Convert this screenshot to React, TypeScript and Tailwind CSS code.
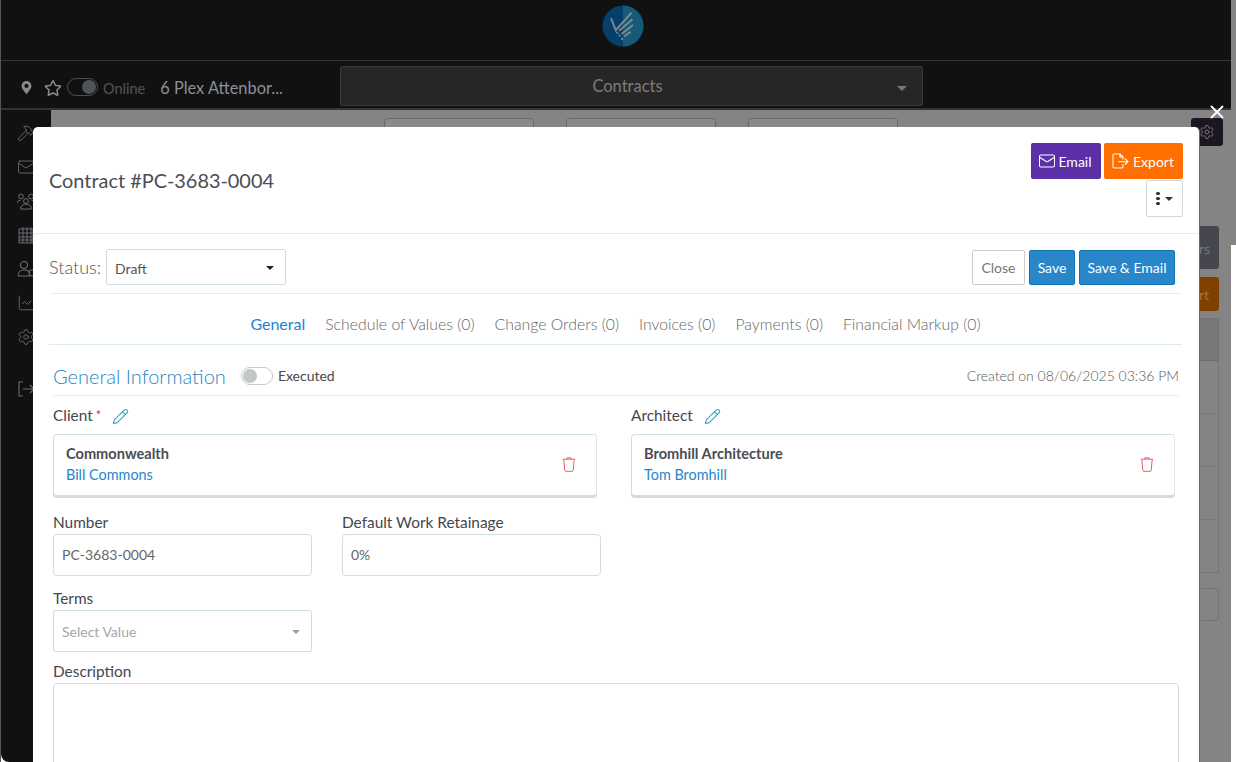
import React from "react";
import { Hammer, Mail, Settings, LineChart, Pencil, X } from "lucide-react";
import { FaMapMarkerAlt, FaRegStar } from "react-icons/fa";

function Caret({ className }: { className: string }) {
  return <span className={`inline-block w-0 h-0 border-x-[4px] border-x-transparent border-t-[4px] ${className}`} />;
}

function TrashIcon() {
  return (
    <svg width="14" height="15" viewBox="0 0 14 15" fill="none" stroke="#e4606d" strokeWidth="1">
      <path d="M.8 2.2h12.4M4.5 2.2 5 .8h4l.5 1.4M1.8 2.2l1 11.3c0 .4.3.8.8.8h6.8c.5 0 .8-.4.8-.8l1-11.3" />
    </svg>
  );
}

function ContactCard({ name, person }: { name: string; person: string }) {
  return (
    <div className="h-[62px] rounded-[4px] border border-[#cfdfe0] border-r-[#e2e5e8] shadow-[0_2px_0_#d3dcdc] pl-3 pr-5 pb-[1px] flex items-center justify-between bg-white">
      <div>
        <div className="text-[14.6px] font-bold leading-[20px] text-[#4a4d53]">{name}</div>
        <div className="text-[14.4px] leading-[20px] mt-[1px] text-[#2a85c7]">{person}</div>
      </div>
      <TrashIcon />
    </div>
  );
}

function Pen() {
  return <Pencil size={17} strokeWidth={1.5} className="text-[#2ba7d3]" />;
}

export default function App() {
  const tabs = ["Schedule of Values (0)", "Change Orders (0)", "Invoices (0)", "Payments (0)", "Financial Markup (0)"];
  return (
    <div className="relative w-[1236px] h-[762px] overflow-hidden bg-white font-['Lato','Open_Sans',sans-serif]">
      {/* dimmed page behind the dialog */}
      <div className="h-[245px] w-[1236px] bg-[#848484]" />

      <div className="absolute inset-0 pr-[5px] pointer-events-none">
        <div className="flex flex-col h-full border-l border-l-[#555]">
          <div className="h-[61px] bg-[#111112] border-b border-[#333] flex items-center justify-center shrink-0 pl-[14px] pb-[8px]">
            <svg width="42" height="42" viewBox="0 0 44 44">
              <circle cx="22" cy="22" r="21.5" fill="#053f6c" />
              <path d="M22 .5a21.5 21.5 0 0 1 0 43z" fill="#175a78" />
              <path d="M9.500 14l4.900 12.400L31 8M18 27l14-12M20.500 30.500l12-9.500M23 33l7-5" stroke="#83888b" strokeWidth="2" fill="none" />
              <rect x="15" y="28" width="2" height="2" fill="#83888b" />
              <rect x="17.500" y="31" width="2" height="2" fill="#83888b" />
              <rect x="20" y="34.500" width="2" height="2" fill="#83888b" />
            </svg>
          </div>
          <div className="h-[49px] bg-[#111112] border-b-2 border-[#333] flex items-center shrink-0 pl-[19px] relative">
            <FaMapMarkerAlt size={13} className="text-[#8a8a8a] mt-[5px]" />
            <FaRegStar size={18} className="text-[#8a8a8a] ml-[11px] mt-[6px]" />
            <div className="w-[31px] h-[18px] rounded-full border border-[#4a5050] ml-[5px] mt-[5px] flex items-center justify-end pr-[1px]">
              <span className="w-[14px] h-[14px] rounded-full bg-[#4c5658]" />
            </div>
            <span className="ml-[5px] text-[14.5px] text-[#555] mt-[8px]">Online</span>
            <span className="ml-[15px] text-[16.4px] text-[#8b9099] mt-[8px] font-normal">6 Plex Attenbor...</span>
            <div className="absolute left-[339px] top-[5px] w-[583px] h-[40px] bg-[#262627] border border-[#3a3a3a] rounded-[2px] flex items-center justify-center pr-[8px]">
              <span className="text-[16.5px] text-[#7c7c7c]">Contracts</span>
              <Caret className="absolute right-[15px] top-[19px] border-t-[#777] !border-x-[5px] !border-t-[5px]" />
            </div>
          </div>
          <div className="flex-1 flex min-h-0">
            <div className="w-[50px] bg-[#111112] rounded-bl-[8px] flex flex-col items-center text-[#6a6e72] pt-[14px] gap-[16px] shrink-0">
              <Hammer size={18} strokeWidth={1.2} />
              <Mail size={18} strokeWidth={1.2} />
              <svg width="18" height="18" viewBox="0 0 18 18" fill="none" stroke="currentColor" strokeWidth="1"><circle cx="4" cy="4.5" r="2.4" /><circle cx="14" cy="4.5" r="2.4" /><circle cx="9" cy="9" r="2.4" /><path d="M0 11.500c0-2 1.500-3.200 3.500-3.200M18 11.500c0-2-1.500-3.200-3.500-3.200M3.500 17c0-3 2-5 5.500-5s5.500 2 5.500 5z" /></svg>
              <svg width="18" height="18" viewBox="0 0 18 18" fill="none" stroke="currentColor" strokeWidth="1"><path d="M2 3h14v14H2zM2 7h14M2 11h14M2 14h14M6 1v16M10 1v16M14 1v16" /></svg>
              <svg width="18" height="18" viewBox="0 0 18 18" fill="none" stroke="currentColor" strokeWidth="1.1"><circle cx="7" cy="5" r="3.5" /><path d="M1 16c0-4 3-6 6-6s5 1 6 3M1 16h12" /><circle cx="15" cy="13" r="3" /></svg>
              <LineChart size={18} strokeWidth={1.2} />
              <Settings size={18} strokeWidth={1.2} />
              <svg className="mt-[18px]" width="18" height="18" viewBox="0 0 18 18" fill="none" stroke="currentColor" strokeWidth="1.1"><path d="M6 2H2v14h4M6 9h11M13 5l4 4-4 4" /></svg>
            </div>
            <div className="flex-1">
              <div className="flex gap-[32px] pl-[333px]">
                <div className="w-[150px] h-[20px] mt-[8px] rounded-[4px] border border-[#6a6a6a] bg-[#8a8a8a]" />
                <div className="w-[150px] h-[20px] mt-[8px] rounded-[4px] border border-[#6a6a6a] bg-[#8a8a8a]" />
                <div className="w-[150px] h-[20px] mt-[8px] rounded-[4px] border border-[#6a6a6a] bg-[#8a8a8a]" />
              </div>
            </div>
          </div>
        </div>
      </div>

      {/* visible slivers of the page to the right of the dialog */}
      <div className="absolute left-[1199px] top-[110px] w-[32px] h-[652px] bg-[#848484]" />
      <div className="absolute left-[1191px] top-[118px] w-[32px] h-[28px] rounded-[3px] bg-[#1c1622] flex items-center justify-center">
        <Settings size={16} strokeWidth={1.4} className="text-[#77777f]" />
      </div>
      <div className="absolute left-[1199px] top-[226px] w-[20px] h-[43px] rounded-r-[3px] bg-[#45464e] text-[#767676] text-[14px] leading-[46px] overflow-hidden">rs</div>
      <div className="absolute left-[1199px] top-[277px] w-[20px] h-[34px] rounded-r-[3px] bg-[#804000] text-[#a87040] text-[14px] leading-[36px] overflow-hidden">rt</div>
      <div className="absolute left-[1199px] top-[318px] w-[20px] h-[255px] border border-l-0 border-[#747474] flex flex-col">
        <div className="h-[42px] bg-[#787878] border-b border-[#6e6e6e]" />
        <div className="h-[53px] border-b border-[#787878]" />
        <div className="h-[53px] border-b border-[#787878]" />
        <div className="h-[53px] border-b border-[#787878]" />
      </div>
      <div className="absolute left-[1199px] top-[588px] w-[20px] h-[33px] rounded-r-[4px] border border-l-0 border-[#747474]" />

      {/* dialog */}
      <div className="absolute left-[33px] top-[127px] w-[1167px] h-[635px] bg-white rounded-t-[5px] overflow-hidden border-r border-r-[#666] text-[#44474d]">
        <div className="h-[107px] border-b border-[#e3eeee] pl-[16px] pr-[16px] flex items-center justify-between">
          <h1 className="text-[19.9px] leading-[28px] text-[#4a4d53]">Contract #PC-3683-0004</h1>
          <div className="flex flex-col items-end self-start pt-[16px]">
            <div className="flex gap-[3px]">
              <div className="w-[70px] h-[36px] rounded-[2px] bg-[#5a2fa8] text-white text-[14px] flex items-center justify-center gap-[2px] pr-[2px]">
                <Mail size={18} strokeWidth={1.4} />Email
              </div>
              <div className="w-[79px] h-[36px] rounded-[2px] bg-[#ff6f00] text-white text-[14px] flex items-center justify-center gap-[4px] pr-[1px]">
                <svg width="17" height="16" viewBox="0 0 17 16" fill="none" stroke="currentColor" strokeWidth="1.1"><path d="M11 6.500V4L8 1H2.200C1.500 1 1 1.500 1 2.200v11.600c0 .7.5 1.200 1.200 1.200h7.600c.7 0 1.200-.5 1.200-1.200V11M8 1v3h3M6 8.700h10M13 5.700l3 3-3 3" /></svg>
                Export
              </div>
            </div>
            <div className="w-[37px] h-[37px] mt-[1px] rounded-[2px] border border-[#d4d6d8] flex items-center justify-center gap-[5px]">
              <div className="flex flex-col gap-[1.5px]">
                <span className="w-[3.5px] h-[3.5px] rounded-full bg-[#333]" />
                <span className="w-[3.5px] h-[3.5px] rounded-full bg-[#333]" />
                <span className="w-[3.5px] h-[3.5px] rounded-full bg-[#333]" />
              </div>
              <Caret className="border-t-[#333]" />
            </div>
          </div>
        </div>

        <div className="pl-[16px] pr-[24px] pt-[15px]">
          <div className="flex items-center h-[36px]">
            <span className="text-[18px] text-[#555] font-light">Status:</span>
            <div className="ml-[5px] w-[180px] h-[36px] border border-[#cfdfe0] rounded-[2px] pl-[8px] pr-[11px] pt-[2px] flex items-center justify-between text-[14px] text-[#555]">
              Draft
              <Caret className="border-t-[#222]" />
            </div>
            <div className="ml-auto flex gap-[4px]">
              <div className="w-[53px] h-[35px] border border-[#ccc] rounded-[2px] flex items-center justify-center text-[14px] text-[#777]">Close</div>
              <div className="w-[46px] h-[35px] bg-[#2886c9] border border-[#0f76b6] rounded-[2px] flex items-center justify-center text-[14px] text-white">Save</div>
              <div className="w-[96px] h-[35px] bg-[#2886c9] border border-[#0f76b6] rounded-[2px] flex items-center justify-center text-[14px] text-white">Save &amp; Email</div>
            </div>
          </div>
        </div>

        <div className="ml-[17px] mr-[17px] mt-[8px] border-b border-[#e3eeee]" />
        <div className="ml-[16px] mr-[17px] h-[51px] border-b border-[#dceded] flex items-center justify-center gap-[20px] text-[15.8px] font-light text-[#666] pt-[10px]">
          <span className="text-[#1d82d6] font-normal text-[16px]">General</span>
          {tabs.map((t) => <span key={t}>{t}</span>)}
        </div>

        <div className="pl-[20px] pr-[20px]">
          <div className="h-[51px] border-b border-[#e3eeee] flex items-center pt-[11px]">
            <h2 className="text-[20px] font-light text-[#2a85c7]">General Information</h2>
            <div className="ml-[15px] w-[32px] h-[18px] rounded-full border border-[#c8cacc] flex items-center pl-[1px]">
              <span className="w-[14px] h-[14px] rounded-full bg-[#c3c6c7]" />
            </div>
            <span className="ml-[5px] text-[14px] text-[#44474d]">Executed</span>
            <span className="ml-auto text-[14px] font-light text-[#555b63]">Created on 08/06/2025 03:36 PM</span>
          </div>

          <div className="grid grid-cols-[544px_544px] gap-x-[34px] mt-[10px]">
            <div>
              <div className="flex items-center h-[20px] text-[15.4px] text-[#44474d]">
                Client<span className="text-[#d63c5e] ml-[3px] text-[13px]">*</span>
                <span className="ml-[11px] flex"><Pen /></span>
              </div>
              <div className="mt-[8px]"><ContactCard name="Commonwealth" person="Bill Commons" /></div>
            </div>
            <div>
              <div className="flex items-center h-[20px] text-[15.4px] text-[#44474d]">
                Architect
                <span className="ml-[11px] flex"><Pen /></span>
              </div>
              <div className="mt-[8px]"><ContactCard name="Bromhill Architecture" person="Tom Bromhill" /></div>
            </div>
          </div>

          <div className="grid grid-cols-[259px_259px] gap-x-[30px] mt-[16px]">
            <div>
              <div className="h-[20px] text-[15.4px] leading-[20px]">Number</div>
              <div className="mt-[2px] h-[42px] border border-[#cfdfe0] rounded-[4px] flex items-center pl-[8px] pb-[1px] text-[14px] text-[#666]">PC-3683-0004</div>
            </div>
            <div>
              <div className="h-[20px] text-[15.4px] leading-[20px]">Default Work Retainage</div>
              <div className="mt-[2px] h-[42px] border border-[#cfdfe0] rounded-[4px] flex items-center pl-[8px] pb-[1px] text-[14px] text-[#666]">0%</div>
            </div>
          </div>

          <div className="w-[259px] mt-[12px]">
            <div className="h-[20px] text-[15.4px] leading-[20px]">Terms</div>
            <div className="mt-[2px] h-[42px] border border-[#cfdfe0] rounded-[2px] flex items-center justify-between pl-[8px] pr-[11px] text-[14px] text-[#a5a7aa]">
              Select Value
              <Caret className="border-t-[#a0a0a0] mt-[2px]" />
            </div>
          </div>

          <div className="mt-[9px] h-[20px] text-[15.4px] leading-[20px]">Description</div>
          <div className="mt-[2px] h-[120px] border border-[#cfdfe0] rounded-[4px]" />
        </div>
      </div>

      <X size={22} strokeWidth={2} className="absolute left-[1206px] top-[101px] text-white" />
    </div>
  );
}
